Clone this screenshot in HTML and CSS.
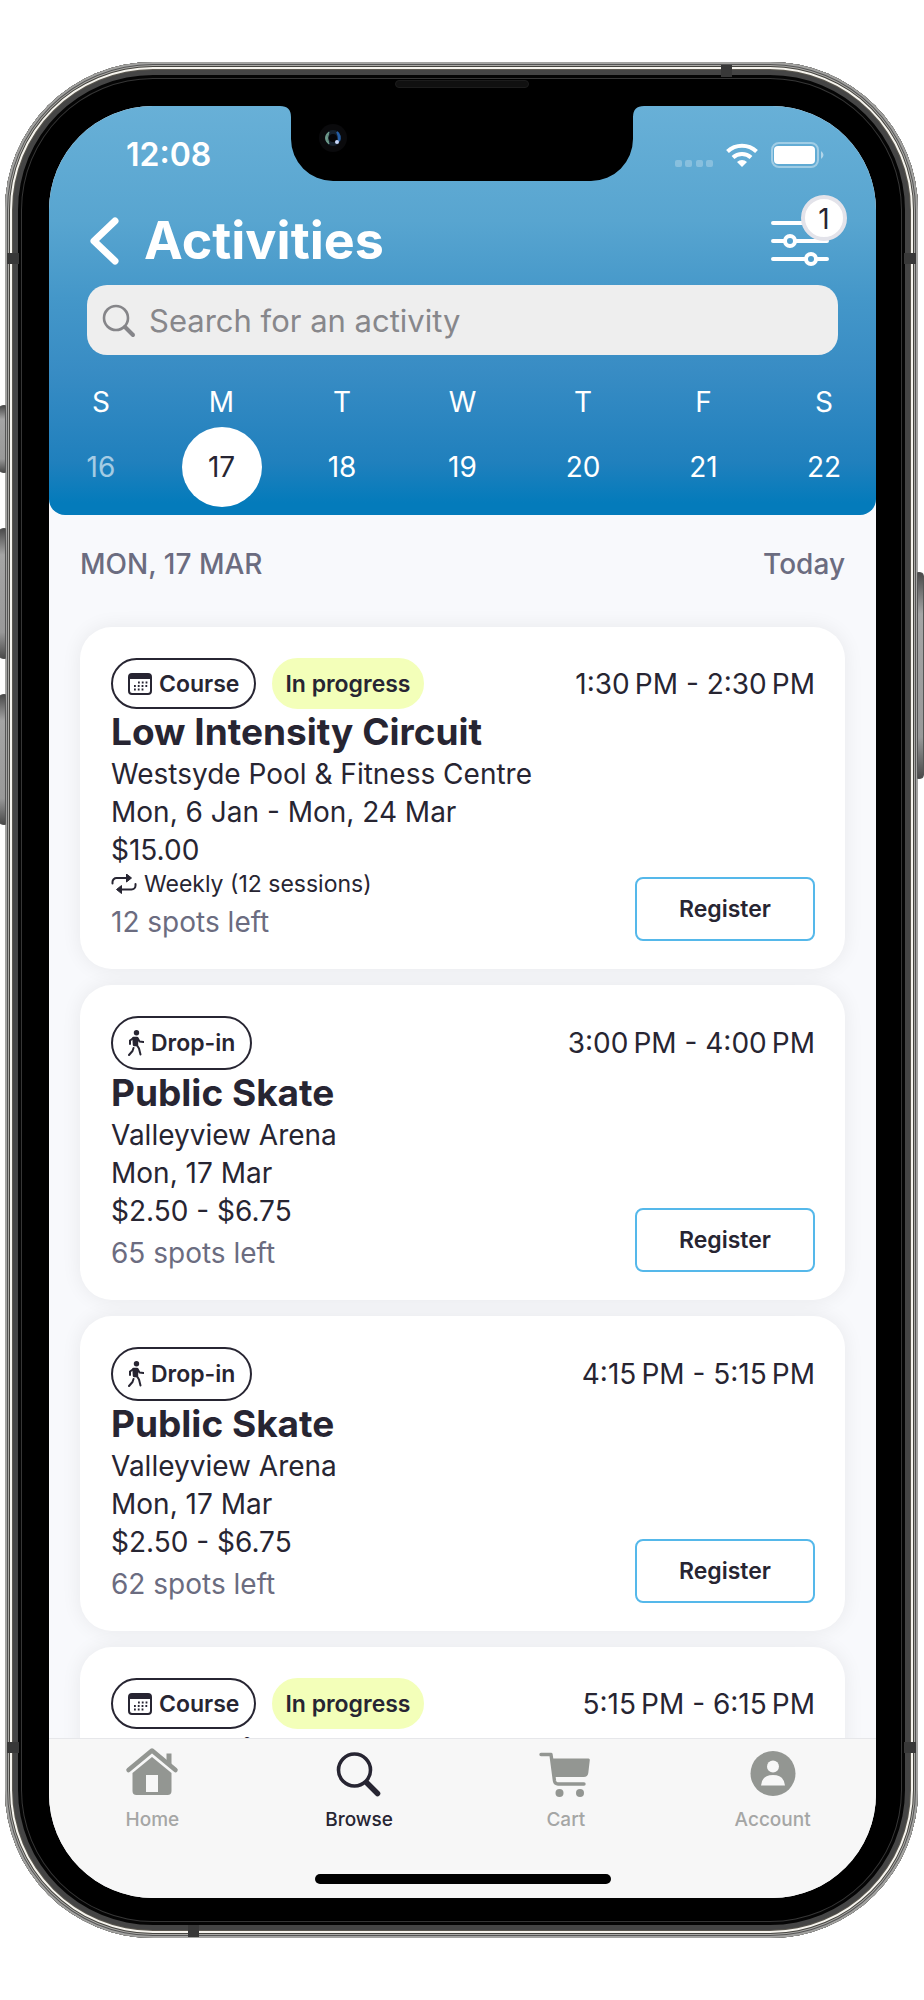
FILE: index.html
```html
<!DOCTYPE html>
<html lang="en">
<head>
<meta charset="utf-8">
<meta name="viewport" content="width=device-width, initial-scale=1">
<title>Activities</title>
<link rel="stylesheet" href="styles.css">
</head>
<body>
<svg class="sprite" aria-hidden="true">
  <symbol id="calendar" viewBox="0 0 24 22">
    <rect x="1" y="1" width="22" height="20" rx="3" fill="none" stroke="currentColor" stroke-width="2"/>
    <path d="M1 6V4a3 3 0 0 1 3-3h16a3 3 0 0 1 3 3v2z" fill="currentColor"/>
    <path d="M10 9.500h10M6 13h14M6 16.500h10" stroke="currentColor" stroke-width="1.800" stroke-dasharray="1.800 2" fill="none"/>
  </symbol>
  <symbol id="walk" viewBox="0 0 16 26">
    <circle cx="8.500" cy="2.800" r="2.700" fill="currentColor"/>
    <path d="M5.500 8h3.500v7H6z" fill="currentColor" stroke="currentColor" stroke-width="2.400" stroke-linejoin="round"/>
    <path d="M5.500 8 2 10.500V14M9.500 8l2 3.500 4 .5M8.500 14.500l2.500 4 1.500 6M5.500 18 4.500 21 1 25" fill="none" stroke="currentColor" stroke-width="2" stroke-linecap="round" stroke-linejoin="round"/>
  </symbol>
  <symbol id="repeat" viewBox="0 0 26 20">
    <path d="M1.500 9.500V8a4 4 0 0 1 4-4H16M24.500 10v1.500a4 4 0 0 1-4 4H10" fill="none" stroke="currentColor" stroke-width="2" stroke-linecap="round"/>
    <path d="M15.500 0v8l5-4zM10.500 11.500v8l-5-4z" fill="currentColor" stroke="currentColor" stroke-linejoin="round"/>
  </symbol>
</svg>

<div class="phone">
  <span class="key key-mute"></span>
  <span class="key key-up"></span>
  <span class="key key-down"></span>
  <span class="key key-power"></span>
  <span class="seam seam-top"></span>
  <span class="seam seam-bottom"></span>
  <span class="seam seam-side seam-lt"></span>
  <span class="seam seam-side seam-rt"></span>
  <span class="seam seam-side seam-lb"></span>
  <span class="seam seam-side seam-rb"></span>
  <span class="speaker"></span>

  <div class="screen">
    <svg class="notch" viewBox="0 0 364 76" aria-hidden="true">
      <path d="M0 0h364q-11 0-11 11v22a42 42 0 0 1-42 42H53a42 42 0 0 1-42-42V11Q11 0 0 0z" fill="#000"/>
      <circle cx="53" cy="32" r="14" fill="#0a0a0c"/>
      <circle cx="53" cy="32" r="8" fill="#15202c"/>
      <path d="M49 26a7 7 0 0 0 0 12q-3-6 0-12z" fill="#6f9c8c" stroke="#6f9c8c"/>
      <path d="M57 26a8 8 0 0 1 2 9q0-6-2-9z" fill="#245da5" stroke="#245da5" stroke-width="2"/>
      <circle cx="53" cy="32" r="4" fill="#050507"/>
      <circle cx="57" cy="36" r="2" fill="#c9d8fa"/>
    </svg>

    <header class="header">
      <div class="status">
        <time class="clock">12:08</time>
        <div class="status-icons">
          <svg width="38" height="8" viewBox="0 0 38 8" fill="#fff" opacity=".25"><rect x="0" y="1" width="7" height="7" rx="2"/><rect x="10" y="1" width="7" height="7" rx="2"/><rect x="21" y="1" width="7" height="7" rx="2"/><rect x="31" y="1" width="7" height="7" rx="2"/></svg>
          <svg class="wifi" width="32" height="24" viewBox="0 0 32 24" fill="none" stroke="#fff" stroke-width="4"><path d="M1.500 8.500a21 21 0 0 1 29 0M7 14.500a13 13 0 0 1 18 0"/><path d="M16 24l-5-5a7.500 7.500 0 0 1 10 0z" fill="#fff" stroke="none"/></svg>
          <svg width="53" height="26" viewBox="0 0 53 26"><rect x="1" y="1" width="46" height="24" rx="7" fill="none" stroke="#fff" stroke-opacity=".4" stroke-width="2"/><rect x="3" y="4" width="41" height="18" rx="4" fill="#fff"/><path d="M50 9q5 4 0 8z" fill="#fff" fill-opacity=".5"/></svg>
        </div>
      </div>

      <div class="titlebar">
        <button class="back" type="button" aria-label="Back">
          <svg width="30" height="50" viewBox="0 0 30 50" fill="none" stroke="#fff" stroke-width="7" stroke-linecap="round" stroke-linejoin="round"><path d="M26 5 5 25l21 20"/></svg>
        </button>
        <h1 class="title">Activities</h1>
        <button class="filter" type="button" aria-label="Filters, 1 active">
          <svg width="60" height="44" viewBox="0 0 60 44" overflow="visible" fill="none" stroke="#fff" stroke-width="4" stroke-linecap="round"><path d="M3 4h54M3 22h11M26 22h31M3 40h32M47 40h10"/><circle cx="20" cy="22" r="5"/><circle cx="41" cy="40" r="5"/></svg>
          <span class="badge">1</span>
        </button>
      </div>

      <label class="search">
        <svg width="34" height="34" viewBox="0 0 34 34" fill="none" stroke="#858589" stroke-linecap="round"><circle cx="14" cy="14" r="12" stroke-width="2.600"/><path d="M23 23l8 8" stroke-width="4"/></svg>
        <input class="search-input" type="search" placeholder="Search for an activity" aria-label="Search for an activity">
      </label>

      <div class="week">
        <button class="day past" type="button"><span>S</span><span class="num">16</span></button>
        <button class="day selected" type="button"><span>M</span><span class="num">17</span></button>
        <button class="day" type="button"><span>T</span><span class="num">18</span></button>
        <button class="day" type="button"><span>W</span><span class="num">19</span></button>
        <button class="day" type="button"><span>T</span><span class="num">20</span></button>
        <button class="day" type="button"><span>F</span><span class="num">21</span></button>
        <button class="day" type="button"><span>S</span><span class="num">22</span></button>
      </div>
    </header>

    <main class="list">
      <div class="date-row"><h2 class="date">MON, 17 MAR</h2><span>Today</span></div>

      <article class="card">
        <div class="card-top">
          <span class="pill course"><svg width="24" height="22"><use href="#calendar"/></svg>Course</span>
          <span class="pill progress">In progress</span>
          <span class="time">1:30&#8239;PM - 2:30&#8239;PM</span>
        </div>
        <h3 class="name">Low Intensity Circuit</h3>
        <div class="card-body">
          <div class="details">
            <p>Westsyde Pool &amp; Fitness Centre</p>
            <p>Mon, 6 Jan - Mon, 24 Mar</p>
            <p>$15.00</p>
            <p class="repeat"><svg width="26" height="20"><use href="#repeat"/></svg>Weekly (12 sessions)</p>
            <p class="spots">12 spots left</p>
          </div>
          <button class="register" type="button">Register</button>
        </div>
      </article>

      <article class="card">
        <div class="card-top">
          <span class="pill dropin"><svg width="16" height="26"><use href="#walk"/></svg>Drop-in</span>
          <span class="time">3:00&#8239;PM - 4:00&#8239;PM</span>
        </div>
        <h3 class="name">Public Skate</h3>
        <div class="card-body">
          <div class="details">
            <p>Valleyview Arena</p>
            <p>Mon, 17 Mar</p>
            <p>$2.50 - $6.75</p>
            <p class="spots">65 spots left</p>
          </div>
          <button class="register" type="button">Register</button>
        </div>
      </article>

      <article class="card">
        <div class="card-top">
          <span class="pill dropin"><svg width="16" height="26"><use href="#walk"/></svg>Drop-in</span>
          <span class="time">4:15&#8239;PM - 5:15&#8239;PM</span>
        </div>
        <h3 class="name">Public Skate</h3>
        <div class="card-body">
          <div class="details">
            <p>Valleyview Arena</p>
            <p>Mon, 17 Mar</p>
            <p>$2.50 - $6.75</p>
            <p class="spots">62 spots left</p>
          </div>
          <button class="register" type="button">Register</button>
        </div>
      </article>

      <article class="card">
        <div class="card-top">
          <span class="pill course"><svg width="24" height="22"><use href="#calendar"/></svg>Course</span>
          <span class="pill progress">In progress</span>
          <span class="time">5:15&#8239;PM - 6:15&#8239;PM</span>
        </div>
        <h3 class="name">Fun Swim</h3>
      </article>
    </main>

    <nav class="tabs">
      <a class="tab" href="#home">
        <svg width="54" height="50" viewBox="0 0 54 50"><path d="M3.500 23 27 3.500 50.500 23" fill="none" stroke="#939692" stroke-width="4.500" stroke-linecap="round" stroke-linejoin="round"/><path d="M41.500 6.500h5v11l-5-4zM27 10l19.500 16v18q0 4-4 4h-31q-4 0-4-4V26z" fill="#939692"/><path d="M21 28h12v17H21z" fill="#f7f7f7"/></svg>
        Home
      </a>
      <a class="tab active" href="#browse">
        <svg width="54" height="50" viewBox="0 0 54 50" fill="none" stroke="#272532" stroke-linecap="round"><circle cx="22.500" cy="23" r="16" stroke-width="3.600"/><path d="M35 36l10.500 10.500" stroke-width="5.500"/></svg>
        Browse
      </a>
      <a class="tab" href="#cart">
        <svg width="54" height="50" viewBox="0 0 54 50"><path d="M2 7.500h10L15.500 34q.6 3 3.500 3h26" fill="none" stroke="#939692" stroke-width="3.400" stroke-linecap="round" stroke-linejoin="round"/><path d="M12.500 11.500h37q1.500 0 1.300 1.500l-1.500 13q-.6 4-4.500 4H15z" fill="#939692"/><circle cx="20.500" cy="46" r="4" fill="#939692"/><circle cx="41" cy="46" r="4" fill="#939692"/></svg>
        Cart
      </a>
      <a class="tab" href="#account">
        <svg width="54" height="50" viewBox="0 0 54 50"><circle cx="27" cy="26.500" r="22.500" fill="#939692"/><circle cx="27" cy="19.500" r="6" fill="#f7f7f7"/><path d="M15 38.500q1-10.500 12-10.500t12 10.500z" fill="#f7f7f7"/></svg>
        Account
      </a>
      <span class="home-bar"></span>
    </nav>
  </div>
</div>
</body>
</html>
```
FILE: styles.css
```css
* { box-sizing: border-box; }

body {
  margin: 0;
  padding: 62px 6px 62px 5px;
  background: #fff;
  color: #272532;
  font-family: Inter, "Liberation Sans", sans-serif;
  font-size: 28px;
  line-height: 38px;
}

h1, h2, h3, p { margin: 0; }
svg { display: block; flex: none; }
button { border: 0; padding: 0; background: none; color: inherit; font: inherit; }
.sprite { position: absolute; width: 0; height: 0; }

/* Phone body */
.phone {
  position: relative;
  height: calc(100vh - 124px);
  padding: 44px 42px 40px 44px;
  border-radius: 148px;
  background: #000;
  box-shadow:
    inset 0 0 0 2px #a3a3a1,
    inset 0 0 0 3px #555,
    inset 0 0 0 4px #aaa9a6,
    inset 0 0 0 5px #45443f,
    inset 0 0 0 7px #f6f4ee,
    inset 0 0 0 8px #5b5850,
    inset 0 0 0 13px #454545,
    inset 0 0 0 16px #050505,
    inset 0 0 0 17px #363636;
}
.key {
  position: absolute;
  left: -6px;
  width: 7px;
  border: 1px solid #555;
  border-radius: 4px 0 0 4px;
  background: linear-gradient(#4a4a4a, #a5a5a5 20%, #999 80%, #4a4a4a);
}
.key-mute { top: 343px; height: 68px; }
.key-up { top: 466px; height: 131px; }
.key-down { top: 632px; height: 131px; }
.key-power { top: 510px; left: auto; right: -6px; height: 207px; border-radius: 0 4px 4px 0; }
.seam { position: absolute; width: 11px; height: 12px; background: #383838; }
.seam-top { top: 3px; left: 716px; }
.seam-bottom { bottom: 1px; left: 183px; }
.seam-side { width: 12px; height: 11px; }
.seam-lt { top: 191px; left: 2px; }
.seam-rt { top: 191px; right: 2px; }
.seam-lb { bottom: 185px; left: 2px; }
.seam-rb { bottom: 185px; right: 2px; }
.speaker {
  position: absolute;
  top: 18px;
  left: 50%;
  width: 134px;
  height: 8px;
  margin-left: -67px;
  border: 1px solid #1c1c1c;
  border-radius: 4px;
  background: #101010;
}

.screen {
  position: relative;
  display: flex;
  flex-direction: column;
  height: 100%;
  overflow: hidden;
  border-radius: 104px;
  background: #f8f9fc;
}
.notch { position: absolute; top: 0; left: 50%; width: 364px; height: 76px; margin-left: -183px; }

/* Header */
.header {
  flex: none;
  padding: 27px 0 8px;
  border-radius: 0 0 16px 16px;
  background: linear-gradient(#68b0d7, #58a5d0 28%, #4497c9 47%, #388cc4 65%, #2080bd 87%, #047bbb 97%);
  color: #fff;
}
.status { display: flex; align-items: center; justify-content: space-between; padding: 0 52px 0 77px; }
.clock { font-size: 32px; font-weight: 600; line-height: 44px; }
.status-icons { display: flex; align-items: center; gap: 13px; }
.status-icons svg:first-child { margin-top: 16px; }
.titlebar { display: flex; align-items: center; gap: 25px; height: 76px; margin-top: 26px; padding: 0 46px 0 40px; }
.title { flex: 1; font-size: 52px; font-weight: 700; line-height: 64px; }
.filter { position: relative; color: #272532; }
.badge {
  position: absolute;
  top: -24px;
  right: -17px;
  width: 46px;
  height: 46px;
  border: 4px solid #e3e3ea;
  border-radius: 50%;
  background: #fff;
  line-height: 40px;
  text-align: center;
}
.search {
  display: flex;
  align-items: center;
  gap: 13px;
  height: 70px;
  margin: 6px 38px 0 38px;
  padding: 2px 15px 0;
  border-radius: 20px;
  background: #eee;
}
.search-input {
  flex: 1;
  min-width: 0;
  border: 0;
  padding: 0;
  outline: 0;
  background: none;
  color: #272532;
  font: inherit;
  font-size: 31px;
}
.search-input::placeholder { color: #87878b; opacity: 1; }
.week { display: flex; justify-content: space-between; margin-top: 28px; padding: 0 12px; }
.day { display: flex; flex-direction: column; align-items: center; gap: 6px; width: 80px; }
.num { width: 80px; height: 80px; border-radius: 50%; line-height: 80px; }
.past .num { opacity: .6; }
.selected .num { background: #fff; color: #272532; }

/* Activity list */
.list { display: flex; flex: 1; flex-direction: column; gap: 16px; min-height: 0; overflow: hidden; padding: 30px 31px 0; }
.date-row { display: flex; flex: none; justify-content: space-between; margin-bottom: 28px; color: #6b6c80; font-weight: 500; }
.date { font-size: 28px; font-weight: 500; }
.card {
  flex: none;
  padding: 31px 30px 28px 31px;
  border-radius: 32px;
  background: #fff;
  box-shadow: 0 0 20px rgba(0, 0, 0, .07);
}
.card-top { display: flex; align-items: center; gap: 16px; }
.pill {
  display: flex;
  align-items: center;
  gap: 7px;
  height: 51px;
  padding: 0 15px;
  border: 2px solid #272532;
  border-radius: 27px;
  font-size: 23px;
  font-weight: 600;
}
.dropin { height: 54px; }
.progress { padding: 0 11px; border-color: #f3ffb9; background: #f3ffb9; }
.time { margin-left: auto; }
.name { font-size: 37px; font-weight: 700; line-height: 46px; }
.card-body { display: flex; align-items: flex-end; justify-content: space-between; }
.repeat { display: flex; align-items: center; gap: 7px; font-size: 23px; line-height: 30px; }
.spots { margin-top: 4px; color: #6b6c80; }
.register {
  width: 180px;
  height: 64px;
  border: 2px solid #55b8ea;
  border-radius: 8px;
  font-size: 23px;
  font-weight: 600;
}

/* Tab bar */
.tabs {
  position: relative;
  display: flex;
  flex: none;
  height: 160px;
  padding-top: 8px;
  border-top: 1px solid #e6e7ea;
  background: #f7f7f7;
}
.tab {
  display: flex;
  flex: 1;
  flex-direction: column;
  align-items: center;
  gap: 10px;
  color: #a5a6a5;
  font-size: 19px;
  font-weight: 500;
  line-height: 26px;
  text-decoration: none;
}
.active { color: #272532; }
.home-bar {
  position: absolute;
  bottom: 14px;
  left: 50%;
  width: 296px;
  height: 10px;
  margin-left: -148px;
  border-radius: 5px;
  background: #000;
}
```
